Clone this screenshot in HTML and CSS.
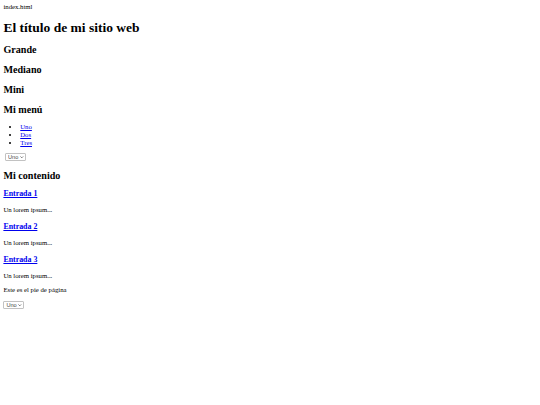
FILE: index.html
```html
<!DOCTYPE html>
<html lang="es">
<head>
<meta charset="utf-8">
<title>index.html</title>
<link rel="stylesheet" href="styles.css">
</head>
<body class="body">
<div class="filename">index.html</div>
<header class="site-header">
  <h1 class="title">El título de mi sitio web</h1>
  <h2 class="heading">Grande</h2>
  <h2 class="heading">Mediano</h2>
  <h2 class="heading">Mini</h2>
</header>
<nav class="menu">
  <h2 class="heading">Mi menú</h2>
  <ul class="menu-list">
    <li class="menu-item"><a class="link" href="#">Uno</a></li>
    <li class="menu-item"><a class="link" href="#">Dos</a></li>
    <li class="menu-item"><a class="link" href="#">Tres</a></li>
  </ul>
  <div class="select-line select-line-nav">
    <span class="select-wrap">
      <select class="picker">
        <option>Uno</option>
        <option>Dos</option>
        <option>Tres</option>
      </select>
      <svg class="chevron" viewBox="0 0 8 5" aria-hidden="true"><path d="M1 1 L4 4 L7 1" fill="none" stroke="#333" stroke-width="1.4"/></svg>
    </span>
  </div>
</nav>
<main class="content">
  <h2 class="heading">Mi contenido</h2>
  <article class="entry">
    <h3 class="entry-title"><a class="link" href="#">Entrada 1</a></h3>
    <p class="text">Un lorem ipsum...</p>
  </article>
  <article class="entry">
    <h3 class="entry-title"><a class="link" href="#">Entrada 2</a></h3>
    <p class="text">Un lorem ipsum...</p>
  </article>
  <article class="entry">
    <h3 class="entry-title"><a class="link" href="#">Entrada 3</a></h3>
    <p class="text">Un lorem ipsum...</p>
  </article>
</main>
<footer class="site-footer">
  <p class="text">Este es el pie de página</p>
  <div class="select-line">
    <span class="select-wrap">
      <select class="picker">
        <option>Uno</option>
        <option>Dos</option>
        <option>Tres</option>
      </select>
      <svg class="chevron" viewBox="0 0 8 5" aria-hidden="true"><path d="M1 1 L4 4 L7 1" fill="none" stroke="#333" stroke-width="1.4"/></svg>
    </span>
  </div>
</footer>
</body>
</html>
```

FILE: styles.css
```css
html {
  background: #ffffff;
}
.body {
  margin: 3.375px;
  font-family: "Liberation Serif", "Times New Roman", serif;
  font-size: 6.75px;
  line-height: 7.76px;
  color: #000000;
}
.filename {
  line-height: 7.6px;
}
.title {
  font-size: 13.5px;
  line-height: 15.2px;
  margin: 9.05px 0;
  font-weight: bold;
}
.heading {
  font-size: 10.125px;
  line-height: 11.39px;
  margin: 8.4px 0;
  font-weight: bold;
}
.entry-title {
  font-size: 7.9px;
  line-height: 9.07px;
  margin: 7.9px 0;
  font-weight: bold;
}
.text {
  margin: 6.75px 0;
}
.menu-list {
  margin: 6.75px 0;
  padding-left: 16.875px;
  line-height: 7.59px;
  list-style: disc;
}
.link {
  color: #0000ee;
  text-decoration: underline;
}
.select-line {
  height: 8.4px;
  line-height: 8.4px;
}
.select-line-nav {
  padding-left: 1.7px;
}
.select-wrap {
  position: relative;
  display: inline-block;
  vertical-align: top;
  width: 21px;
  height: 8.4px;
}
.picker {
  appearance: none;
  -webkit-appearance: none;
  display: block;
  box-sizing: border-box;
  width: 21px;
  height: 8.4px;
  margin: 0;
  padding: 0 0 0 2px;
  font-family: "Liberation Sans", Arial, sans-serif;
  font-size: 5.6px;
  line-height: 6px;
  color: #444444;
  background: #ffffff;
  border: 1px solid #c2c2c2;
  border-radius: 1px;
  outline: none;
}
.chevron {
  position: absolute;
  right: 2.5px;
  top: 3.2px;
  width: 3.6px;
  height: 2.3px;
  pointer-events: none;
}
```
